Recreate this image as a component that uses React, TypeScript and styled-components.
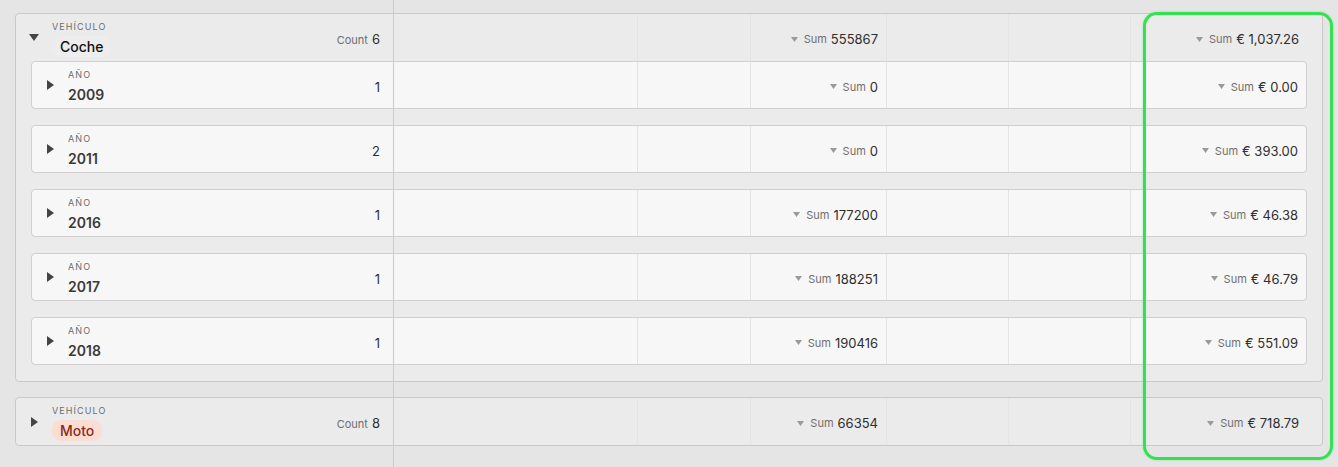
import React from 'react';
import styled, { createGlobalStyle } from 'styled-components';

const GlobalStyle = createGlobalStyle`
  html, body {
    margin: 0;
    padding: 0;
    background: #e5e5e5;
    font-family: Inter, "Noto Sans", "Liberation Sans", sans-serif;
    -webkit-font-smoothing: antialiased;
  }
`;

interface YearRow {
  year: string;
  count: number;
  km: string;
  amount: string;
}

interface Group {
  name: string;
  highlight?: boolean;
  count: number;
  km: string;
  amount: string;
  open: boolean;
  years: YearRow[];
}

const groups: Group[] = [
  {
    name: 'Coche',
    count: 6,
    km: '555867',
    amount: '€ 1,037.26',
    open: true,
    years: [
      { year: '2009', count: 1, km: '0', amount: '€ 0.00' },
      { year: '2011', count: 2, km: '0', amount: '€ 393.00' },
      { year: '2016', count: 1, km: '177200', amount: '€ 46.38' },
      { year: '2017', count: 1, km: '188251', amount: '€ 46.79' },
      { year: '2018', count: 1, km: '190416', amount: '€ 551.09' },
    ],
  },
  {
    name: 'Moto',
    highlight: true,
    count: 8,
    km: '66354',
    amount: '€ 718.79',
    open: false,
    years: [],
  },
];

const Page = styled.div`
  position: relative;
  box-sizing: border-box;
  min-height: 467px;
  padding: 13px 15px 0 15px;
  width: 1338px;
  display: flex;
  flex-direction: column;
  gap: 15px;
`;

const FrozenDivider = styled.div`
  position: absolute;
  left: 393px;
  top: 0;
  bottom: 0;
  width: 1px;
  background: #cbcbcb;
  pointer-events: none;
`;

const Highlight = styled.div`
  position: absolute;
  left: 1143px;
  top: 12px;
  width: 190px;
  height: 448px;
  box-sizing: border-box;
  border: 3px solid #34e251;
  border-radius: 14px;
  box-shadow: 0 0 2px rgba(52, 226, 81, 0.6);
  pointer-events: none;
`;

const GroupCard = styled.div<{ $open: boolean }>`
  width: 1308px;
  box-sizing: border-box;
  background: #ebebeb;
  border: 1px solid #c9c9c9;
  border-radius: 4px;
  padding: 0 15px ${(p) => (p.$open ? 16 : 0)}px 0;
  display: flex;
  flex-direction: column;
`;

const Nested = styled.div`
  padding-left: 15px;
  display: flex;
  flex-direction: column;
  gap: 16px;
`;

const RowGrid = styled.div<{ $first: number; $nested?: boolean }>`
  display: grid;
  grid-template-columns: ${(p) => p.$first}px 245px 113px 136px 122px 122px 1fr;
  height: ${(p) => (p.$nested ? 46 : 47)}px;
  box-sizing: content-box;
  ${(p) =>
    p.$nested &&
    `
    background: #f7f7f7;
    border: 1px solid #d0d0d0;
    border-radius: 4px;
  `}
`;

const Cell = styled.div<{ $divider?: boolean }>`
  display: flex;
  align-items: center;
  justify-content: flex-end;
  padding: 3px 8px 0 8px;
  border-right: ${(p) => (p.$divider ? '1px solid #e4e4e4' : 'none')};
  min-width: 0;
`;

const HeadCell = styled.div`
  display: flex;
  align-items: center;
  padding-right: 13px;
`;

const Toggle = styled.div`
  width: 36px;
  height: 100%;
  display: flex;
  align-items: center;
  justify-content: center;
  flex-shrink: 0;
`;

const TitleBlock = styled.div`
  display: flex;
  flex-direction: column;
  flex: 1;
  padding-top: 3px;
`;

const FieldLabel = styled.span`
  font-size: 9px;
  line-height: 12px;
  letter-spacing: 1.1px;
  color: #6d6d6d;
  text-transform: uppercase;
  margin-bottom: 3px;
`;

const GroupName = styled.span<{ $highlight?: boolean }>`
  align-self: flex-start;
  font-size: 14px;
  line-height: 21px;
  font-weight: 500;
  padding: 0 8px;
  border-radius: 9px;
  color: ${(p) => (p.$highlight ? '#8c2a18' : '#111')};
  background: ${(p) => (p.$highlight ? '#fcddd3' : 'rgba(255,255,255,0.12)')};
`;

const YearName = styled.span`
  font-size: 14px;
  line-height: 20px;
  font-weight: 600;
  color: #3a3a3a;
  margin-top: 1px;
`;

const CountText = styled.span`
  display: flex;
  align-items: baseline;
  gap: 4px;
  padding-top: 3px;
`;

const SmallLabel = styled.span`
  font-size: 11px;
  color: #6f6f6f;
`;

const Value = styled.span`
  font-size: 13px;
  color: #2e2e2e;
`;

const SumBox = styled.span`
  display: flex;
  align-items: center;
  gap: 4px;
  white-space: nowrap;
`;

const Caret = styled.svg`
  margin-right: 2px;
`;

const Triangle: React.FC<{ open: boolean }> = ({ open }) =>
  open ? (
    <svg width="10" height="7" viewBox="0 0 10 7">
      <polygon points="0,0 10,0 5,7" fill="#444" />
    </svg>
  ) : (
    <svg width="7" height="10" viewBox="0 0 7 10">
      <polygon points="0,0 7,5 0,10" fill="#444" />
    </svg>
  );

const Sum: React.FC<{ value: string }> = ({ value }) => (
  <SumBox>
    <Caret width="7" height="5" viewBox="0 0 7 5">
      <polygon points="0,0 7,0 3.5,5" fill="#9a9a9a" />
    </Caret>
    <SmallLabel>Sum</SmallLabel>
    <Value>{value}</Value>
  </SumBox>
);

const ValueCells: React.FC<{ km: string; amount: string }> = ({ km, amount }) => (
  <>
    <Cell $divider />
    <Cell $divider />
    <Cell $divider>
      <Sum value={km} />
    </Cell>
    <Cell $divider />
    <Cell $divider />
    <Cell>
      <Sum value={amount} />
    </Cell>
  </>
);

const App: React.FC = () => {
  return (
    <>
      <GlobalStyle />
      <Page>
        {groups.map((group) => (
          <GroupCard key={group.name} $open={group.open}>
            <RowGrid $first={377}>
              <HeadCell>
                <Toggle>
                  <Triangle open={group.open} />
                </Toggle>
                <TitleBlock>
                  <FieldLabel>Vehículo</FieldLabel>
                  <GroupName $highlight={group.highlight}>{group.name}</GroupName>
                </TitleBlock>
                <CountText>
                  <SmallLabel>Count</SmallLabel>
                  <Value>{group.count}</Value>
                </CountText>
              </HeadCell>
              <ValueCells km={group.km} amount={group.amount} />
            </RowGrid>
            {group.open && (
              <Nested>
                {group.years.map((row) => (
                  <RowGrid key={row.year} $first={361} $nested>
                    <HeadCell>
                      <Toggle>
                        <Triangle open={false} />
                      </Toggle>
                      <TitleBlock>
                        <FieldLabel>Año</FieldLabel>
                        <YearName>{row.year}</YearName>
                      </TitleBlock>
                      <CountText>
                        <Value>{row.count}</Value>
                      </CountText>
                    </HeadCell>
                    <ValueCells km={row.km} amount={row.amount} />
                  </RowGrid>
                ))}
              </Nested>
            )}
          </GroupCard>
        ))}
        <FrozenDivider />
        <Highlight />
      </Page>
    </>
  );
};

export default App;
